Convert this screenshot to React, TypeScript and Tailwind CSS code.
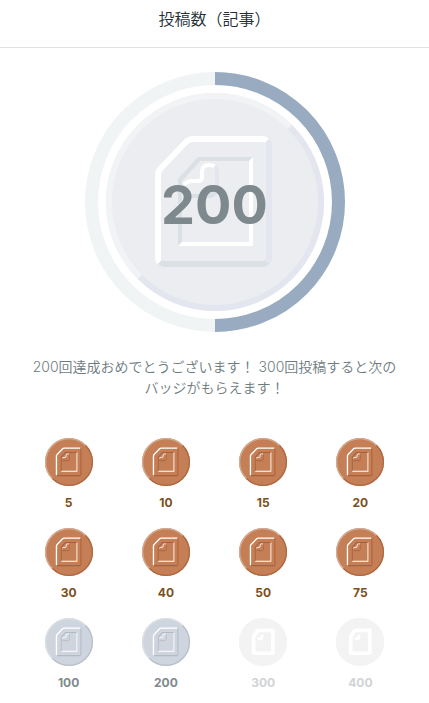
import React from 'react';

type Tone = 'bronze' | 'silver' | 'platinum' | 'locked';

interface Palette {
  face: string;
  light: string;
  side: string;
  dark: string;
  rimLight: string;
  rimDark: string;
}

const palettes: Record<Tone, Palette> = {
  bronze: { face: '#c57f56', light: '#ffffff', side: '#b5673c', dark: '#a9613a', rimLight: '#d3ab93', rimDark: '#b06840' },
  silver: { face: '#ced5df', light: '#ffffff', side: '#b8c0cc', dark: '#b2bcc4', rimLight: '#dbe0e4', rimDark: '#b9c1cb' },
  platinum: { face: '#ebedf0', light: '#ffffff', side: '#e3e6ee', dark: '#dae0e4', rimLight: '#f1f3f5', rimDark: '#e3e6ee' },
  locked: { face: '#f3f3f3', light: '#ffffff', side: '#ffffff', dark: '#ffffff', rimLight: '#f3f3f3', rimDark: '#f3f3f3' },
};

const badges: { count: number; tone: Tone }[] = [
  { count: 5, tone: 'bronze' },
  { count: 10, tone: 'bronze' },
  { count: 15, tone: 'bronze' },
  { count: 20, tone: 'bronze' },
  { count: 30, tone: 'bronze' },
  { count: 40, tone: 'bronze' },
  { count: 50, tone: 'bronze' },
  { count: 75, tone: 'bronze' },
  { count: 100, tone: 'silver' },
  { count: 200, tone: 'silver' },
  { count: 300, tone: 'locked' },
  { count: 400, tone: 'locked' },
];

const labelColors: Record<Tone, string> = {
  bronze: 'text-[#7d4f1c]',
  silver: 'text-[#7e898d]',
  platinum: 'text-[#7e898d]',
  locked: 'text-[#d0d3d5]',
};

const Medal: React.FC<{ tone: Tone; className?: string }> = ({ tone, className }) => {
  const p = palettes[tone];

  return (
    <svg viewBox="0 0 218 218" className={className} fill="none" aria-hidden="true">
      <circle cx="109" cy="109" r="109" fill={p.face} />
      {/* Rim */}
      <g strokeWidth="6">
        <path d="M34 184A106 106 0 0 1 184 34" stroke={p.rimLight} />
        <path d="M184 34A106 106 0 0 1 34 184" stroke={p.rimDark} />
      </g>

      {tone === 'locked' ? (
        <>
          <path
            fill="#fff"
            fillRule="evenodd"
            d="M86 48H153Q162 48 162 57V159Q162 168 153 168H67Q58 168 58 159V84Q58 79 61 76L80 51Q82 48 86 48ZM90 65L75 85V152H146V65Z"
          />
          <path d="M84 94H97Q104 94 104 87V76" stroke="#fff" strokeWidth="13" />
        </>
      ) : (
        <>
          {/* Sheet, outer edge */}
          <g strokeWidth="6">
            <path d="M161 48Q159 46 157 46H87Q83 46 80 49L55 75Q52 78 52 82V165Q52 168 54 169" stroke={p.light} />
            <path d="M161 48Q163 50 163 52V165Q163 168 161 169" stroke={p.side} />
            <path d="M54 169Q56 171 58 171H157Q159 171 161 169" stroke={p.dark} />
          </g>
          {/* Sheet, inner edge */}
          <path d="M72 153V86L92 64H147L143 68H94L76 88V149Z" fill={p.dark} />
          <path d="M147 64V153H72L76 149H143V68Z" fill={p.light} />
          {/* Folded corner */}
          <g strokeWidth="4">
            <path d="M78 92Q81 88 86 88H92Q96 88 96 84V79Q96 72 103 72H104Q107 72 109 74" stroke={p.light} />
            <path d="M109 73Q111 75 111 79V96Q111 99 109 101" stroke={p.side} />
            <path d="M109 100Q106 103 102 103H85Q80 103 78 100" stroke={p.dark} />
          </g>
        </>
      )}
    </svg>
  );
};

const Progress: React.FC<{ count: number }> = ({ count }) => (
  <div className="relative mx-auto size-65">
    <svg viewBox="0 0 260 260" className="size-full" fill="none" strokeWidth="13" aria-hidden="true">
      <circle cx="130" cy="130" r="123.5" stroke="#f1f4f5" />
      <path d="M130 6.5A123.5 123.5 0 0 1 130 253.5" stroke="#98abc1" />
    </svg>
    <div className="absolute inset-0 flex items-center justify-center">
      <Medal tone="platinum" className="size-[218px]" />
    </div>
    <div className="absolute inset-0 flex items-center justify-center pt-1 text-[54px] font-bold text-[#7e898d]">
      {count}
    </div>
  </div>
);

const App: React.FC = () => {
  return (
    <div className="bg-white font-[Inter,'Noto_Sans_CJK_JP',sans-serif]" lang="ja">
      <header className="h-12 border-b border-[#dfe1e2] pt-1.5 text-center">
        <h1 className="text-base leading-[26px] font-[350] text-[#222e33]">投稿数（記事）</h1>
      </header>

      <main className="px-5 pt-6">
        <Progress count={200} />

        <p className="mt-6 px-3 text-center text-sm leading-[21px] font-[350] text-[#6e7b80]">
          200回達成おめでとうございます！ 300回投稿すると次のバッジがもらえます！
        </p>

        <ul className="mt-10 grid grid-cols-4 gap-y-4">
          {badges.map(({ count, tone }) => (
            <li key={count} className="flex flex-col items-center gap-2">
              <Medal tone={tone} className="size-12" />
              <span className={`text-xs leading-[18px] font-bold ${labelColors[tone]}`}>{count}</span>
            </li>
          ))}
        </ul>
      </main>
    </div>
  );
};

export default App;
